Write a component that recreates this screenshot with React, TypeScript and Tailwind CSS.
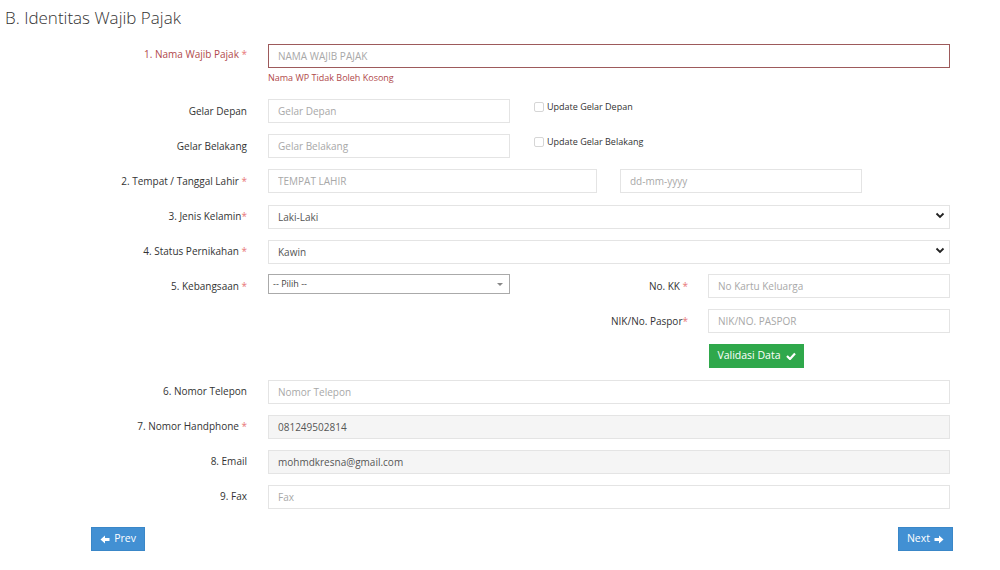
import React from "react";

const inputBase =
  "h-[24px] w-full border border-[#e4e4e4] bg-white px-[9px] text-[10px] text-[#555] placeholder:text-[#a8a8a8] outline-none";

function Label({ text, required, error }: { text: string; required?: boolean; error?: boolean }) {
  return (
    <div
      className={`w-[247px] shrink-0 text-right text-[10px] ${error ? "text-[#b0494b]" : "text-[#333]"}`}
    >
      {text}
      {required && <span className="text-[#e87878]"> *</span>}
    </div>
  );
}

function Chevron() {
  return (
    <svg
      className="pointer-events-none absolute right-[5px] top-[9px]"
      width="10"
      height="7"
      viewBox="0 0 10 7"
    >
      <path d="M1.5 1.5 L5 5 L8.5 1.5" fill="none" stroke="#222" strokeWidth="1.8" />
    </svg>
  );
}

function Row({ children }: { children: React.ReactNode }) {
  return <div className="flex h-[24px] items-center">{children}</div>;
}

export default function App() {
  return (
    <div className="h-[570px] w-[1000px] overflow-hidden bg-white font-['Open_Sans',sans-serif] text-[#333]">
      <h3 className="pl-[5px] pt-[6px] text-[17px] font-light leading-[24px] text-[#333]">
        B. Identitas Wajib Pajak
      </h3>

      <div className="mt-[12px] w-[950px]">
        {/* 1. Nama */}
        <div className="flex items-start">
          <div className="flex h-[24px] items-center">
            <Label text="1. Nama Wajib Pajak" required error />
          </div>
          <div className="ml-[21px] flex-1">
            <input
              className="h-[24px] w-full border border-[#9d5a5b] bg-white px-[9px] text-[10px] text-[#555] placeholder:text-[#a8a8a8] outline-none"
              placeholder="NAMA WAJIB PAJAK"
            />
            <div className="mt-[3px] text-[9px] leading-[14px] text-[#b0494b]">
              Nama WP Tidak Boleh Kosong
            </div>
          </div>
        </div>

        <div className="mt-[14px] flex flex-col gap-[11px]">
          <Row>
            <Label text="Gelar Depan" />
            <div className="ml-[21px] flex h-full flex-1 items-start">
              <input className={`${inputBase} !w-[242px]`} placeholder="Gelar Depan" />
              <label className="ml-[24px] mt-[1px] flex items-center gap-[3px] text-[9px] text-[#333]">
                <span className="inline-block h-[10px] w-[10px] rounded-[2px] border border-[#d6d6d6] bg-white" />
                Update Gelar Depan
              </label>
            </div>
          </Row>

          <Row>
            <Label text="Gelar Belakang" />
            <div className="ml-[21px] flex h-full flex-1 items-start">
              <input className={`${inputBase} !w-[242px]`} placeholder="Gelar Belakang" />
              <label className="ml-[24px] mt-[1px] flex items-center gap-[3px] text-[9px] text-[#333]">
                <span className="inline-block h-[10px] w-[10px] rounded-[2px] border border-[#d6d6d6] bg-white" />
                Update Gelar Belakang
              </label>
            </div>
          </Row>

          <Row>
            <Label text="2. Tempat / Tanggal Lahir" required />
            <div className="ml-[21px] flex flex-1 items-center">
              <input className={`${inputBase} !w-[329px]`} placeholder="TEMPAT LAHIR" />
              <input className={`${inputBase} ml-[23px] !w-[242px]`} placeholder="dd-mm-yyyy" />
            </div>
          </Row>

          <Row>
            <div className="w-[247px] shrink-0 text-right text-[10px] text-[#333]">
              3. Jenis Kelamin<span className="text-[#e87878]">*</span>
            </div>
            <div className="relative ml-[21px] flex-1">
              <select className={`${inputBase} appearance-none text-[#333]`} defaultValue="L">
                <option value="L">Laki-Laki</option>
                <option value="P">Perempuan</option>
              </select>
              <Chevron />
            </div>
          </Row>

          <Row>
            <Label text="4. Status Pernikahan" required />
            <div className="relative ml-[21px] flex-1">
              <select className={`${inputBase} appearance-none text-[#333]`} defaultValue="K">
                <option value="K">Kawin</option>
                <option value="B">Belum Kawin</option>
              </select>
              <Chevron />
            </div>
          </Row>

          <Row>
            <Label text="5. Kebangsaan" required />
            <div className="ml-[21px] flex h-full flex-1 items-start">
              <div className="flex h-[20px] w-[242px] items-center justify-between border border-[#aaa] bg-white pl-[4px] pr-[6px] text-[9px] text-[#444]">
                <span>-- Pilih --</span>
                <span className="h-0 w-0 border-x-[3px] border-t-[3px] border-x-transparent border-t-[#888]" />
              </div>
              <div className="flex h-[24px] flex-1 items-center">
                <div className="w-[178px] text-right text-[10px]">
                  No. KK<span className="text-[#e87878]"> *</span>
                </div>
                <input className={`${inputBase} ml-[20px] !w-[242px]`} placeholder="No Kartu Keluarga" />
              </div>
            </div>
          </Row>

          <Row>
            <div className="w-[247px] shrink-0" />
            <div className="ml-[21px] flex flex-1 items-center">
              <div className="w-[242px]" />
              <div className="w-[178px] text-right text-[10px]">
                NIK/No. Paspor<span className="text-[#e87878]">*</span>
              </div>
              <input className={`${inputBase} ml-[20px] !w-[242px]`} placeholder="NIK/NO. PASPOR" />
            </div>
          </Row>

          <Row>
            <div className="w-[247px] shrink-0" />
            <div className="ml-[462px] flex">
              <button className="flex h-[24px] w-[95px] items-center justify-center gap-[5px] bg-[#2fa84b] text-[10.5px] text-white">
                Validasi Data
                <svg width="10" height="8" viewBox="0 0 10 8">
                  <path d="M1 4 L4 7 L9 1.5" fill="none" stroke="#fff" strokeWidth="2.2" />
                </svg>
              </button>
            </div>
          </Row>

          <Row>
            <Label text="6. Nomor Telepon" />
            <div className="ml-[21px] flex-1">
              <input className={inputBase} placeholder="Nomor Telepon" />
            </div>
          </Row>

          <Row>
            <Label text="7. Nomor Handphone" required />
            <div className="ml-[21px] flex-1">
              <input className={`${inputBase} !bg-[#f5f5f5]`} defaultValue="081249502814" readOnly />
            </div>
          </Row>

          <Row>
            <Label text="8. Email" />
            <div className="ml-[21px] flex-1">
              <input className={`${inputBase} !bg-[#f5f5f5]`} defaultValue="mohmdkresna@gmail.com" readOnly />
            </div>
          </Row>

          <Row>
            <Label text="9. Fax" />
            <div className="ml-[21px] flex-1">
              <input className={inputBase} placeholder="Fax" />
            </div>
          </Row>
        </div>

        <div className="mt-[19px] flex w-[953px] justify-between pl-[91px]">
          <button className="flex h-[24px] w-[54px] items-center justify-center gap-[4px] border border-[#3a87c8] bg-[#4290d3] text-[10.5px] text-white">
            <svg width="10" height="9" viewBox="0 0 10 9">
              <path d="M9.5 3 H5 V0.5 L0.5 4.5 L5 8.5 V6 H9.5 Z" fill="#fff" />
            </svg>
            Prev
          </button>
          <button className="flex h-[24px] w-[55px] items-center justify-center gap-[4px] border border-[#3a87c8] bg-[#4290d3] text-[10.5px] text-white">
            Next
            <svg width="10" height="9" viewBox="0 0 10 9">
              <path d="M0.5 3 H5 V0.5 L9.5 4.5 L5 8.5 V6 H0.5 Z" fill="#fff" />
            </svg>
          </button>
        </div>
      </div>
    </div>
  );
}
